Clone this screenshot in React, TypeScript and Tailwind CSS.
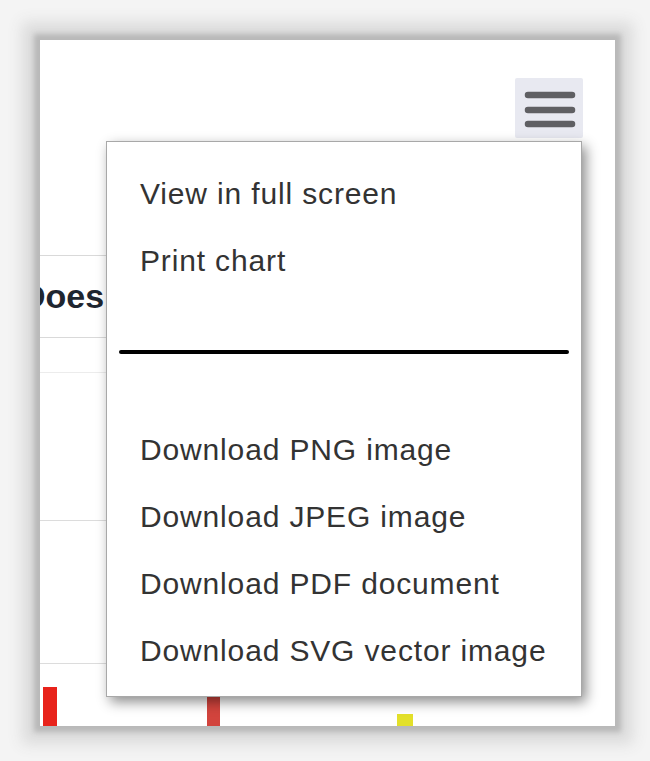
import React from 'react';

const menuTop = ['View in full screen', 'Print chart'];
const menuDownloads = [
  'Download PNG image',
  'Download JPEG image',
  'Download PDF document',
  'Download SVG vector image',
];

const MenuItem: React.FC<{ label: string }> = ({ label }) => (
  <div className="h-[67px] flex items-center pl-[33px] text-[30px] tracking-[0.85px] text-[#333333] whitespace-nowrap">
    {label}
  </div>
);

const HamburgerButton: React.FC = () => (
  <div className="w-[68px] h-[60px] bg-[#e8e9f1] rounded-[2px]">
    <svg width="68" height="60" viewBox="0 0 68 60">
      <g stroke="#5f5f63" strokeWidth="6.5" strokeLinecap="round">
        <line x1="13" y1="17" x2="57" y2="17" />
        <line x1="13" y1="32" x2="57" y2="32" />
        <line x1="13" y1="46" x2="57" y2="46" />
      </g>
    </svg>
  </div>
);

const App: React.FC = () => {
  return (
    <div
      className="w-[650px] h-[761px] bg-[#f4f4f4] pt-[40px] pl-[40px] overflow-hidden"
      style={{ fontFamily: '"Liberation Sans", Arial, sans-serif' }}
    >
      <div className="relative w-[575px] h-[686px] bg-white shadow-[0_0_5px_6px_#b9b9b9,0_0_14px_18px_#dbdbdb]">
        <div className="w-full h-full overflow-hidden flex flex-col">
          <div className="h-[215px] flex justify-end pt-[38px] pr-[32px]">
            <HamburgerButton />
          </div>
          <div className="pr-[60px]">
            <div className="h-[82px] border-t border-[#d9d9d9] flex items-center">
              <span className="ml-[-19px] text-[34px] font-bold text-[#1f2630]">Does</span>
            </div>
            <div className="h-[35px] border-t border-[#d9d9d9]" />
            <div className="h-[148px] border-t border-[#ececec]" />
            <div className="h-[143px] border-t border-[#dcdcdc]" />
            <div className="h-[63px] border-t border-[#dcdcdc] flex items-end">
              <div className="ml-[3px] w-[14px] h-[39px] bg-[#e8231b]" />
              <div className="ml-[150px] w-[13px] h-[40px] bg-[#d2443d]" />
              <div className="ml-[177px] w-[16px] h-[12px] bg-[#e3e02a]" />
            </div>
          </div>
        </div>

        <div className="absolute left-[66px] top-[101px] w-[476px] h-[556px] bg-white border border-[#a8a8a8] shadow-[4px_5px_12px_rgba(0,0,0,0.45)] pt-[18px]">
          {menuTop.map((label) => (
            <MenuItem key={label} label={label} />
          ))}
          <div className="mt-[56px] mx-[12px] h-[4px] rounded-full bg-black" />
          <div className="mt-[62px]">
            {menuDownloads.map((label) => (
              <MenuItem key={label} label={label} />
            ))}
          </div>
        </div>
      </div>
    </div>
  );
};

export default App;
